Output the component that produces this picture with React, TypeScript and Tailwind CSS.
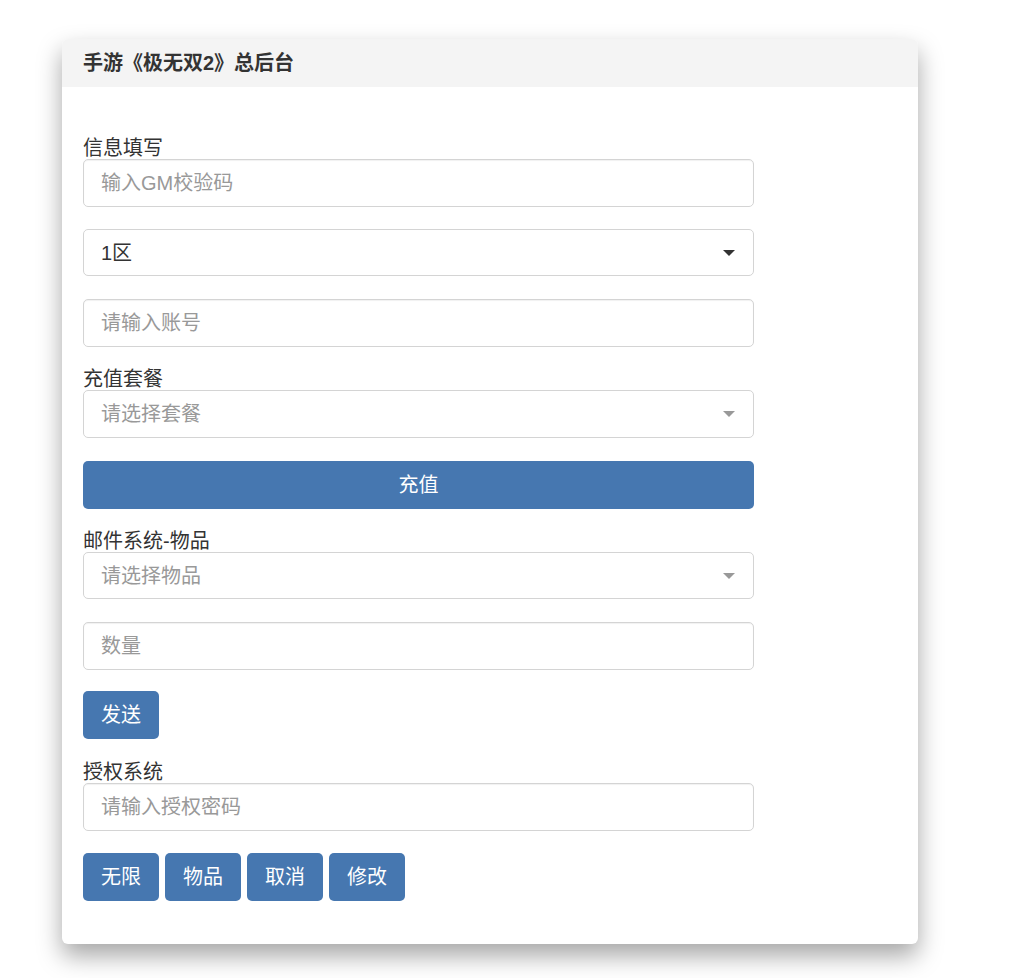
import React from 'react';

const FONT = { fontFamily: '"Liberation Sans", "Noto Sans CJK SC", sans-serif' };

function Label({ children }: { children: React.ReactNode }) {
  return <div className="h-[22px] leading-[22px] text-[20px] text-[#333]">{children}</div>;
}

function Input({ placeholder }: { placeholder: string }) {
  return (
    <input
      placeholder={placeholder}
      className="block w-full h-12 px-[17px] text-[20px] text-[#555] placeholder:text-[#999] bg-white border border-[#d4d4d4] rounded-[5px] shadow-[inset_0_1px_1px_rgba(0,0,0,0.06)] outline-none"
    />
  );
}

function Select({ value, placeholder, tall }: { value?: string; placeholder?: string; tall?: boolean }) {
  return (
    <div
      className={`relative flex items-center w-full ${tall ? 'h-12' : 'h-[47px]'} px-[17px] bg-white border border-[#d4d4d4] rounded-[5px]`}
    >
      <span className={`text-[20px] ${value ? 'text-[#333]' : 'text-[#999]'}`}>{value || placeholder}</span>
      <span
        className={`ml-auto mr-[1px] w-0 h-0 border-l-[6px] border-r-[6px] border-t-[6px] border-l-transparent border-r-transparent ${
          value ? 'border-t-[#333]' : 'border-t-[#999]'
        }`}
      />
    </div>
  );
}

function Btn({ children }: { children: React.ReactNode }) {
  return (
    <button className="h-12 w-[76px] bg-[#4677b0] text-white text-[20px] rounded-[5px]">{children}</button>
  );
}

export default function App() {
  return (
    <div className="min-h-[978px] bg-white pt-[39px] pl-[62px]" style={FONT}>
      <div className="w-[856px] bg-white rounded-[6px] shadow-[0_12px_24px_rgba(0,0,0,0.35)] overflow-hidden">
        {/* Header */}
        <div className="h-12 bg-[#f4f4f4] flex items-center px-[21px]">
          <h1 className="text-[20px] font-bold text-[#333]">手游《极无双2》总后台</h1>
        </div>

        <div className="px-[21px] pt-[50px] pb-[43px] w-[713px]">
          <Label>信息填写</Label>
          <Input placeholder="输入GM校验码" />
          <div className="h-[22px]" />
          <Select value="1区" />
          <div className="h-[23px]" />
          <Input placeholder="请输入账号" />
          <div className="h-[21px]" />

          <Label>充值套餐</Label>
          <Select placeholder="请选择套餐" tall />
          <div className="h-[23px]" />
          <button className="block w-full h-12 bg-[#4677b0] text-white text-[20px] rounded-[5px]">充值</button>
          <div className="h-[21px]" />

          <Label>邮件系统-物品</Label>
          <Select placeholder="请选择物品" />
          <div className="h-[23px]" />
          <Input placeholder="数量" />
          <div className="h-[21px]" />
          <Btn>发送</Btn>
          <div className="h-[22px]" />

          <Label>授权系统</Label>
          <Input placeholder="请输入授权密码" />
          <div className="h-[22px]" />
          <div className="flex gap-[6px]">
            <Btn>无限</Btn>
            <Btn>物品</Btn>
            <Btn>取消</Btn>
            <Btn>修改</Btn>
          </div>
        </div>
      </div>
    </div>
  );
}
